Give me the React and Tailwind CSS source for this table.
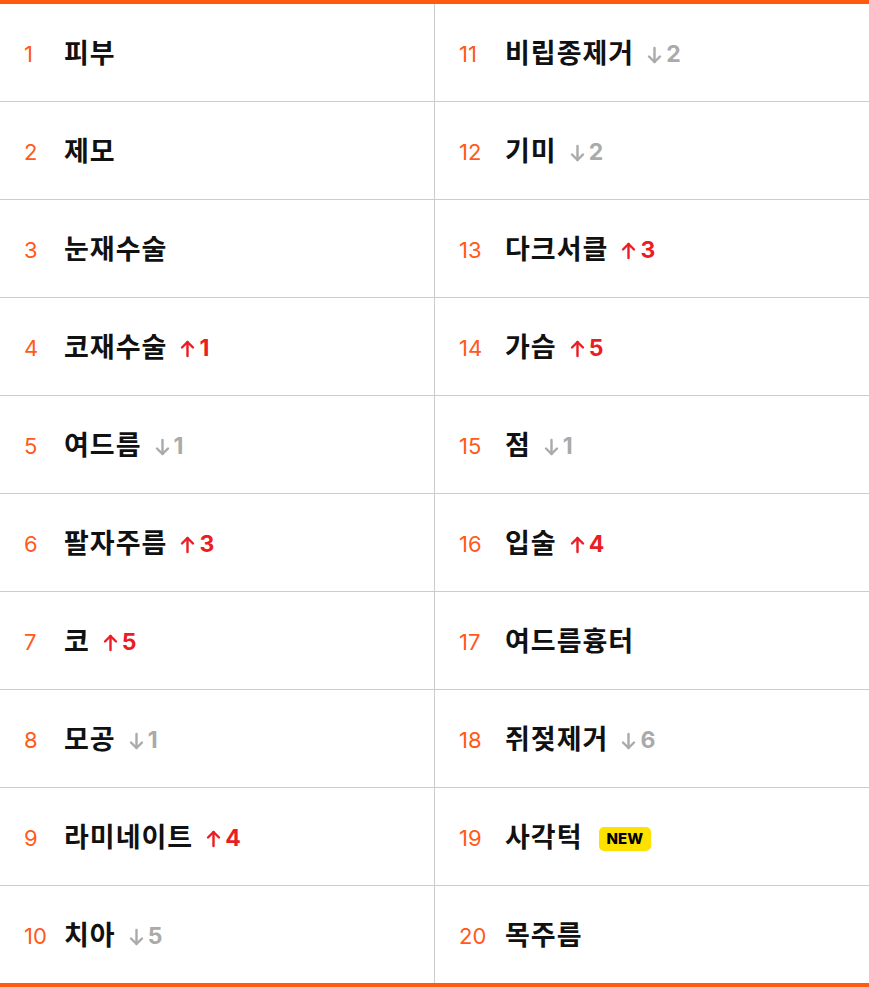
const left = [
  { rank: 1, name: '피부' },
  { rank: 2, name: '제모' },
  { rank: 3, name: '눈재수술' },
  { rank: 4, name: '코재수술', dir: 'up', n: 1 },
  { rank: 5, name: '여드름', dir: 'down', n: 1 },
  { rank: 6, name: '팔자주름', dir: 'up', n: 3 },
  { rank: 7, name: '코', dir: 'up', n: 5 },
  { rank: 8, name: '모공', dir: 'down', n: 1 },
  { rank: 9, name: '라미네이트', dir: 'up', n: 4 },
  { rank: 10, name: '치아', dir: 'down', n: 5 },
]

const right = [
  { rank: 11, name: '비립종제거', dir: 'down', n: 2 },
  { rank: 12, name: '기미', dir: 'down', n: 2 },
  { rank: 13, name: '다크서클', dir: 'up', n: 3 },
  { rank: 14, name: '가슴', dir: 'up', n: 5 },
  { rank: 15, name: '점', dir: 'down', n: 1 },
  { rank: 16, name: '입술', dir: 'up', n: 4 },
  { rank: 17, name: '여드름흉터' },
  { rank: 18, name: '쥐젖제거', dir: 'down', n: 6 },
  { rank: 19, name: '사각턱', isNew: true },
  { rank: 20, name: '목주름' },
]

const Arrow = ({ up }) => (
  <svg width="15" height="18" viewBox="0 0 15 18" fill="none" stroke="currentColor" strokeWidth="2.4" strokeLinecap="round" strokeLinejoin="round">
    {up ? (
      <>
        <path d="M7.5 16V2" />
        <path d="M2 7.5L7.5 2L13 7.5" />
      </>
    ) : (
      <>
        <path d="M7.5 2V16" />
        <path d="M2 10.5L7.5 16L13 10.5" />
      </>
    )}
  </svg>
)

const Change = ({ item }) => {
  if (item.isNew) {
    return (
      <span className="ml-4 inline-flex h-[24px] items-center rounded-[5px] bg-[#ffe100] px-[8px] text-[15px] font-extrabold leading-none text-black">
        NEW
      </span>
    )
  }
  if (!item.dir) return null
  const up = item.dir === 'up'
  return (
    <span className={`ml-[13px] flex items-center gap-[4px] text-[23px] font-bold ${up ? 'text-[#ec1c24]' : 'text-[#aaaaaa]'}`}>
      <Arrow up={up} />
      <span>{item.n}</span>
    </span>
  )
}

const Row = ({ item, numWidth, last }) => (
  <div className={`flex items-center pl-6 pt-1 ${last ? 'h-[97px]' : 'h-[98px] border-b border-[#cccccc]'}`}>
    <span className={`${numWidth} text-[22px] text-[#ff5a1a]`}>{item.rank}</span>
    <span className="text-[27px] font-bold tracking-[1px] text-[#111111]">{item.name}</span>
    <Change item={item} />
  </div>
)

export default function App() {
  return (
    <div
      className="w-[869px] border-y-4 border-[#ff5a0f] bg-white"
      style={{ fontFamily: 'Inter, "Noto Sans CJK KR", sans-serif' }}
    >
      <div className="grid grid-cols-[435px_1fr]">
        <div className="border-r border-[#cccccc]">
          {left.map((item, i) => (
            <Row key={item.rank} item={item} numWidth="w-[40px]" last={i === left.length - 1} />
          ))}
        </div>
        <div>
          {right.map((item, i) => (
            <Row key={item.rank} item={item} numWidth="w-[46px]" last={i === right.length - 1} />
          ))}
        </div>
      </div>
    </div>
  )
}
